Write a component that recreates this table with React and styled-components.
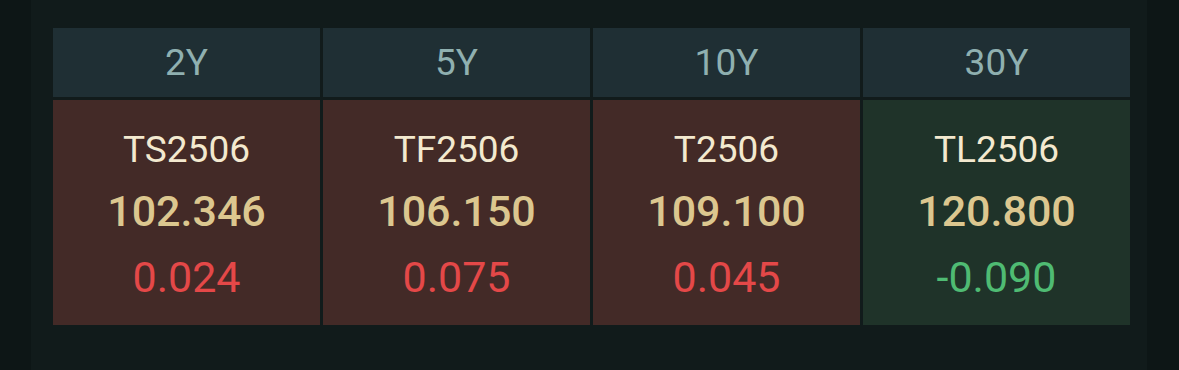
import React from "react";
import styled, { createGlobalStyle } from "styled-components";

const GlobalStyle = createGlobalStyle`
  html, body {
    margin: 0;
    padding: 0;
    background: #0d1616;
    font-family: Roboto, "Noto Sans", "Liberation Sans", sans-serif;
  }
`;

const contracts = [
  { term: "2Y", code: "TS2506", price: "102.346", change: "0.024" },
  { term: "5Y", code: "TF2506", price: "106.150", change: "0.075" },
  { term: "10Y", code: "T2506", price: "109.100", change: "0.045" },
  { term: "30Y", code: "TL2506", price: "120.800", change: "-0.090" },
];

const App = () => {
  return (
    <>
      <GlobalStyle />
      <Panel>
        <Board>
          {contracts.map((c) => (
            <Head key={c.term}>{c.term}</Head>
          ))}
          {contracts.map((c) => {
            const up = !c.change.startsWith("-");
            return (
              <Cell key={c.code} $up={up}>
                <Code>{c.code}</Code>
                <Price>{c.price}</Price>
                <Change $up={up}>{c.change}</Change>
              </Cell>
            );
          })}
        </Board>
      </Panel>
    </>
  );
};

const Panel = styled.div`
  margin-left: 31px;
  width: 1116px;
  height: 370px;
  background: #111b1b;
  padding: 28px 0 0 22px;
  box-sizing: border-box;
`;

const Board = styled.div`
  width: 1077px;
  display: grid;
  grid-template-columns: repeat(4, 1fr);
  grid-template-rows: 69px 225px;
  gap: 3px;
`;

const Head = styled.div`
  background: #1f2f34;
  color: #8fb0b0;
  font-size: 37px;
  display: flex;
  align-items: center;
  justify-content: center;
`;

const Cell = styled.div`
  background: ${(p) => (p.$up ? "#432a27" : "#1f3329")};
  display: flex;
  flex-direction: column;
  align-items: center;
  padding-top: 20px;
  box-sizing: border-box;
`;

const Code = styled.div`
  color: #f3e9cf;
  font-size: 37px;
  line-height: 60px;
`;

const Price = styled.div`
  color: #dcc78f;
  font-size: 43px;
  font-weight: 500;
  line-height: 62px;
`;

const Change = styled.div`
  color: ${(p) => (p.$up ? "#e44848" : "#4fbb73")};
  font-size: 43px;
  line-height: 70px;
`;

export default App;
